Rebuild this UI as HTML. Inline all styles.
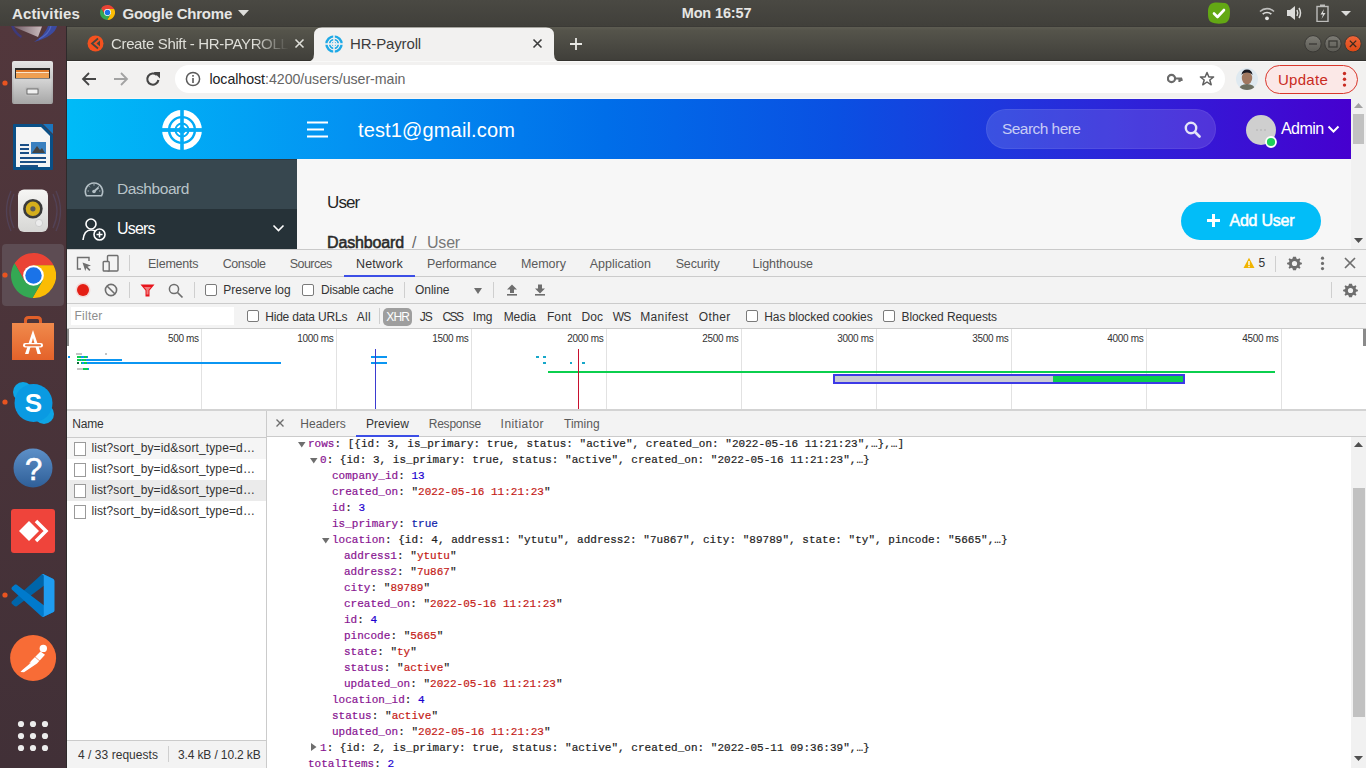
<!DOCTYPE html>
<html><head><meta charset="utf-8">
<style>
*{box-sizing:border-box;margin:0;padding:0}
html,body{width:1366px;height:768px;overflow:hidden;background:#f2f2f2;font-family:"Liberation Sans",sans-serif;position:relative}
.a{position:absolute}
.t{white-space:pre}
</style></head><body>
<div class="a" style="left:0px;top:0px;width:1366px;height:27px;background:linear-gradient(#4a4943,#403f3a);"></div>
<div class="a" style="left:0px;top:26px;width:1366px;height:1px;background:#3b3a36;"></div>
<div class="a t" style="left:12.00px;top:4.30px;font-size:15px;line-height:19px;color:#e6e6e4;font-weight:bold;letter-spacing:0.131px;">Activities</div>
<svg class="a" style="left:100.2px;top:5.199999999999999px;" width="15.0" height="15.0" viewBox="-1 -1 2 2"><path d="M-0.842 -0.539A1 1 0 0 1 0.888 -0.46L0 -0.46L0 0L-0.398 0.23Z" fill="#ea4335"/><path d="M0.888 -0.46A1 1 0 0 1 -0.046 0.999L0.398 0.23L0 0L0 -0.46Z" fill="#fbbc04"/><path d="M-0.046 0.999A1 1 0 0 1 -0.842 -0.539L-0.398 0.23L0 0L0.398 0.23Z" fill="#34a853"/><circle r="0.46" fill="#fff"/><circle r="0.365" fill="#1a73e8"/></svg>
<div class="a t" style="left:122.50px;top:4.30px;font-size:15px;line-height:19px;color:#e6e6e4;font-weight:bold;letter-spacing:-0.231px;">Google Chrome</div>
<svg class="a" style="left:238px;top:10px;" width="11" height="7" viewBox="0 0 11 7"><path d="M0 0H11L5.5 6Z" fill="#dededb"/></svg>
<div class="a t" style="left:681.70px;top:4.17px;font-size:14.5px;line-height:18px;color:#e6e6e4;font-weight:bold;letter-spacing:-0.134px;">Mon 16:57</div>
<svg class="a" style="left:1207px;top:2px;" width="24" height="22" viewBox="0 0 24 22"><path d="M6 1C10 0 14 1 18 1C22 2 23 6 23 10C23 15 22 20 18 21C13 22 8 22 4 20C1 18 1 14 1 10C1 6 2 2 6 1Z" fill="#63a814"/><path d="M7 11.5L10.5 15L17 8" stroke="#fff" stroke-width="2.6" fill="none" stroke-linecap="round" stroke-linejoin="round"/></svg>
<svg class="a" style="left:1259px;top:6px;" width="16" height="15" viewBox="0 0 16 15"><path d="M1 5.5A10 10 0 0 1 15 5.5" stroke="#bdbdbb" stroke-width="1.6" fill="none"/><path d="M3.7 8.2A6.3 6.3 0 0 1 12.3 8.2" stroke="#dcdcda" stroke-width="1.6" fill="none"/><circle cx="8" cy="12.3" r="1.9" fill="#e6e6e4"/></svg>
<svg class="a" style="left:1286px;top:5px;" width="17" height="16" viewBox="0 0 17 16"><path d="M1 5H4L9 1V15L4 11H1Z" fill="#dcdcda"/><path d="M11 5Q12.5 8 11 11" stroke="#dcdcda" stroke-width="1.5" fill="none"/><path d="M13 3Q16 8 13 13" stroke="#dcdcda" stroke-width="1.5" fill="none"/></svg>
<svg class="a" style="left:1316px;top:4px;" width="14" height="18" viewBox="0 0 14 18"><rect x="4" y="0.5" width="5" height="2" fill="#bdbdbb"/><rect x="1" y="2.5" width="11" height="15" fill="none" stroke="#bdbdbb" stroke-width="1.4"/><path d="M8 5L4.5 10.5H7L5.5 15L9.5 9H7Z" fill="#dcdcda"/></svg>
<svg class="a" style="left:1341px;top:11px;" width="11" height="6" viewBox="0 0 11 6"><path d="M0 0H10L5 5Z" fill="#dcdcda"/></svg>
<div class="a" style="left:0px;top:26px;width:67px;height:742px;background:linear-gradient(#52373c,#413037);"></div>
<div class="a" style="left:66px;top:26px;width:1px;height:742px;background:#2e2a2b;"></div>
<svg class="a" style="left:5px;top:26px;" width="57" height="18" viewBox="0 0 57 18"><defs><linearGradient id="env" x1="0" y1="0" x2="1" y2="0"><stop offset="0" stop-color="#6e5a64"/><stop offset="1" stop-color="#cbbcbe"/></linearGradient></defs><path d="M8 0.5L37 0.5L33 11Z" fill="url(#env)"/><path d="M6 0Q9 8 16 12L17 10Q11 6 9 0Z" fill="#3d3a7a"/><path d="M35 0H52Q50 10 29 16Q40 9 43 0Z" fill="#3b4aa0"/><path d="M46 0Q44 8 34 13" stroke="#5266c0" stroke-width="1.2" fill="none"/></svg>
<svg class="a" style="left:11px;top:60px;" width="43" height="45" viewBox="0 0 43 45"><defs><linearGradient id="fc" x1="0" y1="0" x2="0" y2="1"><stop offset="0" stop-color="#e6e6e6"/><stop offset="1" stop-color="#9a9a9a"/></linearGradient><linearGradient id="fd" x1="0" y1="0" x2="0" y2="1"><stop offset="0" stop-color="#d6d6d6"/><stop offset="1" stop-color="#a6a6a6"/></linearGradient></defs><rect x="1" y="1" width="41" height="43" rx="2" fill="url(#fc)"/><rect x="4" y="8" width="35" height="11" fill="#2a2a2a"/><rect x="5" y="10" width="33" height="8" fill="#e07a2a"/><rect x="5" y="12" width="33" height="1.3" fill="#fbe6c8"/><rect x="5" y="14" width="33" height="4" fill="#f0a050"/><rect x="2.5" y="18.5" width="38" height="25.5" fill="url(#fd)"/><rect x="14" y="27" width="15" height="9" rx="2" fill="#bdbdbd"/><rect x="16" y="29" width="11" height="5" fill="#f0f0f0" stroke="#555" stroke-width="0.8"/></svg>
<svg class="a" style="left:2px;top:80px;" width="6" height="6" viewBox="0 0 6 6"><circle cx="3" cy="3" r="2.6" fill="#e95420"/></svg>
<svg class="a" style="left:12px;top:123px;" width="42" height="48" viewBox="0 0 42 48"><path d="M2 1H30L41 12V46Q41 47 40 47H2Q1 47 1 46V2Q1 1 2 1Z" fill="#0a4f86"/><path d="M4 4H29L38 13V44H4Z" fill="#f4f4f4"/><path d="M31 1H41V11Z" fill="#1b76bf"/><rect x="8" y="21" width="9" height="2" fill="#1b4f86"/><rect x="8" y="25" width="9" height="2" fill="#1b4f86"/><rect x="8" y="29" width="9" height="2" fill="#1b4f86"/><rect x="19" y="19" width="15" height="12" fill="#3a80c0"/><path d="M20 30L25 23L28 27L30 25L33 30Z" fill="#444"/><rect x="8" y="34" width="26" height="2" fill="#1b4f86"/><rect x="8" y="38" width="26" height="2" fill="#1b4f86"/><rect x="8" y="42" width="18" height="2" fill="#1b4f86"/></svg>
<svg class="a" style="left:4px;top:186px;" width="59" height="50" viewBox="0 0 59 50"><g fill="none" stroke="#5a5a88" stroke-width="1.3" opacity="0.35"><path d="M10 8Q2 25 10 42"/><path d="M7 5Q-2 25 7 45"/><path d="M49 8Q57 25 49 42"/><path d="M52 5Q61 25 52 45"/></g><defs><linearGradient id="rb" x1="0" y1="0" x2="0" y2="1"><stop offset="0" stop-color="#f6f6f4"/><stop offset="1" stop-color="#d6d6d4"/></linearGradient></defs><rect x="14" y="3.5" width="30" height="42.5" rx="6" fill="url(#rb)"/><circle cx="28.9" cy="22.8" r="9.8" fill="#3a3a3a"/><circle cx="28.9" cy="22.8" r="7.2" fill="#d4ae1c"/><circle cx="28.9" cy="22.8" r="2.6" fill="#5a5a5a"/><circle cx="35" cy="37" r="3.6" fill="#ececec" stroke="#c8c8c8" stroke-width="0.8"/></svg>
<div class="a" style="left:2px;top:244px;width:62px;height:62px;background:#5d4c53;border-radius:4px"></div>
<svg class="a" style="left:10.5px;top:252.5px;" width="45.0" height="45.0" viewBox="-1 -1 2 2"><path d="M-0.842 -0.539A1 1 0 0 1 0.888 -0.46L0 -0.46L0 0L-0.398 0.23Z" fill="#ea4335"/><path d="M0.888 -0.46A1 1 0 0 1 -0.046 0.999L0.398 0.23L0 0L0 -0.46Z" fill="#fbbc04"/><path d="M-0.046 0.999A1 1 0 0 1 -0.842 -0.539L-0.398 0.23L0 0L0.398 0.23Z" fill="#34a853"/><circle r="0.46" fill="#fff"/><circle r="0.365" fill="#1a73e8"/></svg>
<svg class="a" style="left:2px;top:272px;" width="6" height="6" viewBox="0 0 6 6"><circle cx="3" cy="3" r="2.6" fill="#e95420"/></svg>
<svg class="a" style="left:11px;top:316px;" width="44" height="45" viewBox="0 0 44 45"><defs><linearGradient id="asg" x1="0" y1="0" x2="0" y2="1"><stop offset="0" stop-color="#f08a4c"/><stop offset="1" stop-color="#e4622a"/></linearGradient></defs><path d="M14.5 10V4.5Q14.5 1.5 17.5 1.5H26.5Q29.5 1.5 29.5 4.5V10" stroke="#e0602a" stroke-width="3" fill="none"/><rect x="1" y="7" width="42" height="37" fill="url(#asg)"/><path d="M22 14L14 38H17.5L22 22L26.5 38H30Z" fill="#fff"/><rect x="12" y="27" width="20" height="4.5" rx="2.2" fill="#fff"/><rect x="14" y="28.3" width="16" height="1.9" rx="1" fill="#e8743a"/></svg>
<svg class="a" style="left:12px;top:381px;" width="43" height="44" viewBox="0 0 43 44"><circle cx="11" cy="11" r="10" fill="#0ea5e5"/><circle cx="32" cy="33" r="10" fill="#0ea5e5"/><circle cx="21.5" cy="22" r="19" fill="#0a9ae2"/><text x="21.5" y="31" text-anchor="middle" font-family="Liberation Sans" font-weight="bold" font-size="26" fill="#fff">S</text></svg>
<svg class="a" style="left:2px;top:399px;" width="6" height="6" viewBox="0 0 6 6"><circle cx="3" cy="3" r="2.6" fill="#e95420"/></svg>
<svg class="a" style="left:13px;top:448px;" width="40" height="40" viewBox="0 0 40 40"><defs><linearGradient id="hg" x1="0" y1="0" x2="0" y2="1"><stop offset="0" stop-color="#5d90c8"/><stop offset="1" stop-color="#2f5f98"/></linearGradient></defs><circle cx="20" cy="20" r="19.5" fill="url(#hg)"/><text x="20.5" y="32" text-anchor="middle" font-family="Liberation Sans" font-size="31" fill="#fff" stroke="#fff" stroke-width="0.6">?</text></svg>
<svg class="a" style="left:11px;top:509px;" width="44" height="44" viewBox="0 0 44 44"><rect x="0" y="0" width="44" height="44" rx="3" fill="#ef443b"/><path d="M8 22L18 12L28 22L18 32Z" fill="#fff"/><path d="M25 12L35 22L25 32" stroke="#fff" stroke-width="3.5" fill="none"/></svg>
<svg class="a" style="left:11px;top:574px;" width="44" height="43" viewBox="0 0 100 100"><path d="M96.5 10.8L75.9 0.9C73.5 -0.3 70.6 0.2 68.8 2.1L1.3 63.6C-0.5 65.2 -0.5 68.1 1.4 69.7L6.9 74.7C8.4 76.1 10.6 76.2 12.2 74.9L93.4 13.3C96.1 11.3 100 13.2 100 16.6V16.4C100 14 98.6 11.8 96.5 10.8Z" fill="#0065a9"/><path d="M96.5 89.2L75.9 99.1C73.5 100.3 70.6 99.8 68.8 97.9L1.3 36.5C-0.5 34.8 -0.5 32 1.4 30.3L6.9 25.3C8.4 23.9 10.6 23.8 12.2 25.1L93.4 86.7C96.1 88.7 100 86.8 100 83.4V83.6C100 86 98.6 88.2 96.5 89.2Z" fill="#007acc"/><path d="M75.9 99.1C73.5 100.3 70.6 99.8 68.8 97.9C71.1 100.2 75 98.6 75 95.3V4.7C75 1.4 71.1 -0.2 68.8 2.1C70.6 0.2 73.5 -0.3 75.9 0.9L96.5 10.8C98.6 11.8 100 14 100 16.4V83.6C100 86 98.6 88.2 96.5 89.2Z" fill="#1f9cf0"/></svg>
<svg class="a" style="left:2px;top:592px;" width="6" height="6" viewBox="0 0 6 6"><circle cx="3" cy="3" r="2.6" fill="#e95420"/></svg>
<svg class="a" style="left:10px;top:635px;" width="47" height="47" viewBox="0 0 47 47"><circle cx="23.1" cy="23.1" r="23" fill="#f86c36"/><circle cx="33.3" cy="13.4" r="3.7" fill="#fff"/><path d="M30.5 16.5L35 19.8L27 28.5L14 37.2L10.5 37L12 35.2L21.5 27.2L19 28.5L22 25Z" fill="#fff"/><path d="M24 21L31 27" stroke="#f86c36" stroke-width="0.7"/></svg>
<svg class="a" style="left:15px;top:718px;" width="36" height="36" viewBox="0 0 36 36"><circle cx="6" cy="6" r="3.1" fill="#ececec"/><circle cx="18" cy="6" r="3.1" fill="#ececec"/><circle cx="30" cy="6" r="3.1" fill="#ececec"/><circle cx="6" cy="18" r="3.1" fill="#ececec"/><circle cx="18" cy="18" r="3.1" fill="#ececec"/><circle cx="30" cy="18" r="3.1" fill="#ececec"/><circle cx="6" cy="30" r="3.1" fill="#ececec"/><circle cx="18" cy="30" r="3.1" fill="#ececec"/><circle cx="30" cy="30" r="3.1" fill="#ececec"/></svg>
<div class="a" style="left:67px;top:27px;width:1299px;height:33px;background:linear-gradient(#5d5c52,#55544b 10%,#403f3a);"></div>
<div class="a" style="left:67px;top:60px;width:1299px;height:1px;background:#33322e;"></div>
<svg class="a" style="left:87px;top:35px;" width="17" height="17" viewBox="0 0 17 17"><circle cx="8.5" cy="8.5" r="8" fill="#f4511e"/><path d="M11 3.5L5 8.5L11 13.5" stroke="#47463f" stroke-width="1.8" fill="none"/><path d="M9.5 8.5L13 5.5V11.5Z" fill="#47463f"/></svg>
<div class="a t" style="left:111px;top:33px;width:178px;height:22px;overflow:hidden;font-size:15px;line-height:22px;color:#dfdfd9;letter-spacing:-0.35px;-webkit-mask-image:linear-gradient(to right,#000 80%,transparent)">Create Shift - HR-PAYROLL</div>
<svg class="a" style="left:294px;top:38px;" width="11" height="11" viewBox="0 0 11 11"><path d="M1.5 1.5L9.5 9.5M9.5 1.5L1.5 9.5" stroke="#dfdfd9" stroke-width="1.6"/></svg>
<svg class="a" style="left:306px;top:27px;" width="256" height="35" viewBox="0 0 256 35"><path d="M0 35Q8 35 8 27V8Q8 0.5 16 0.5H240Q248 0.5 248 8V27Q248 35 256 35Z" fill="#f2f1f0"/></svg>
<svg class="a" style="left:325px;top:35px;" width="18" height="18" viewBox="0 0 18 18"><circle cx="9" cy="9" r="7.6" fill="none" stroke="#1ea9e6" stroke-width="2.4"/><circle cx="9" cy="9" r="4.3" fill="none" stroke="#1ea9e6" stroke-width="1.7"/><circle cx="9" cy="9" r="2" fill="none" stroke="#1ea9e6" stroke-width="0.9"/><rect x="8.2" y="0" width="1.6" height="18" fill="#f2f1f0"/><rect x="0" y="8.2" width="18" height="1.6" fill="#f2f1f0"/></svg>
<div class="a t" style="left:350.00px;top:34.10px;font-size:15px;line-height:19px;color:#3c3c3c;letter-spacing:-0.151px;">HR-Payroll</div>
<svg class="a" style="left:532px;top:38px;" width="11" height="11" viewBox="0 0 11 11"><path d="M1.5 1.5L9.5 9.5M9.5 1.5L1.5 9.5" stroke="#3c3c3c" stroke-width="1.6"/></svg>
<svg class="a" style="left:569px;top:37px;" width="14" height="14" viewBox="0 0 14 14"><path d="M7 1V13M1 7H13" stroke="#e8e8e4" stroke-width="1.8"/></svg>
<svg class="a" style="left:1303px;top:34px;" width="60" height="20" viewBox="0 0 60 20"><defs><linearGradient id="wb" x1="0" y1="0" x2="0" y2="1"><stop offset="0" stop-color="#7e7d76"/><stop offset="1" stop-color="#5b5a54"/></linearGradient><linearGradient id="wc" x1="0" y1="0" x2="0" y2="1"><stop offset="0" stop-color="#f0663a"/><stop offset="1" stop-color="#dd4814"/></linearGradient></defs><circle cx="10" cy="9.8" r="8.2" fill="url(#wb)" stroke="#3a3935" stroke-width="1"/><path d="M6 10H14" stroke="#3a3935" stroke-width="1.3"/><circle cx="30" cy="9.8" r="8.2" fill="url(#wb)" stroke="#3a3935" stroke-width="1"/><rect x="26" y="7" width="8" height="6" fill="none" stroke="#3a3935" stroke-width="1.3"/><circle cx="50" cy="9.8" r="8.2" fill="url(#wc)" stroke="#3a3935" stroke-width="1"/><path d="M46.8 6.6L53.2 13M53.2 6.6L46.8 13" stroke="#3a2a20" stroke-width="1.3"/></svg>
<div class="a" style="left:67px;top:61px;width:1299px;height:37px;background:#f2f1f0;"></div>
<div class="a" style="left:67px;top:61px;width:1299px;height:1px;background:#f9f9f8;"></div>
<svg class="a" style="left:81px;top:71px;" width="16" height="16" viewBox="0 0 16 16"><path d="M15 8H2.5M8 2L2 8L8 14" stroke="#454545" stroke-width="1.8" fill="none"/></svg>
<svg class="a" style="left:113px;top:71px;" width="16" height="16" viewBox="0 0 16 16"><path d="M1 8H13.5M8 2L14 8L8 14" stroke="#a2a2a2" stroke-width="1.8" fill="none"/></svg>
<svg class="a" style="left:145px;top:71px;" width="16" height="16" viewBox="0 0 16 16"><path d="M13.4 9A5.6 5.6 0 1 1 11.8 4.1" stroke="#454545" stroke-width="2.1" fill="none"/><path d="M8.5 1H15V7.5Z" fill="#454545"/></svg>
<div class="a" style="left:175px;top:65px;width:1050px;height:28px;background:#fff;border-radius:14px"></div>
<svg class="a" style="left:185px;top:71px;" width="16" height="16" viewBox="0 0 16 16"><circle cx="8" cy="8" r="6.6" fill="none" stroke="#5a5a5a" stroke-width="1.5"/><rect x="7.2" y="7" width="1.6" height="5" fill="#5a5a5a"/><rect x="7.2" y="4" width="1.6" height="1.7" fill="#5a5a5a"/></svg>
<div class="a t" style="left:209.4px;top:69.6px;font-size:14.2px;line-height:18px;color:#202124;letter-spacing:-0.04px">localhost<span style="color:#656565">:4200/users/user-main</span></div>
<svg class="a" style="left:1167px;top:73px;" width="16" height="11" viewBox="0 0 16 11"><circle cx="4.5" cy="5.5" r="3.6" fill="none" stroke="#6a6a6a" stroke-width="2.2"/><path d="M8 5.5H15M12.5 5.5V9M14.5 5.5V8" stroke="#6a6a6a" stroke-width="2.2"/></svg>
<svg class="a" style="left:1199px;top:71px;" width="16" height="16" viewBox="0 0 16 16"><path d="M8 1.5L9.9 6H14.6L10.8 9L12.2 13.8L8 11L3.8 13.8L5.2 9L1.4 6H6.1Z" fill="none" stroke="#606060" stroke-width="1.5" stroke-linejoin="round"/></svg>
<svg class="a" style="left:1236px;top:68px;" width="22" height="22" viewBox="0 0 22 22"><defs><clipPath id="av"><circle cx="11" cy="11" r="11"/></clipPath></defs><g clip-path="url(#av)"><rect width="22" height="22" fill="#dfe9f0"/><ellipse cx="11" cy="10" rx="5.2" ry="6.5" fill="#a07860"/><path d="M5.5 7Q6 1.5 11 1.5Q16 1.5 16.5 7Q15 4.5 11 4.5Q7 4.5 5.5 7Z" fill="#1a1a22"/><path d="M2 22Q4 16 11 16Q18 16 20 22Z" fill="#6c6f60"/></g></svg>
<div class="a" style="left:1265px;top:65px;width:93px;height:29px;background:#fbe8e7;border:1px solid #d9372c;border-radius:14.5px"></div>
<div class="a t" style="left:1278.00px;top:70.10px;font-size:15px;line-height:19px;color:#c92b22;letter-spacing:0.272px;">Update</div>
<svg class="a" style="left:1342px;top:71px;" width="5" height="17" viewBox="0 0 5 17"><circle cx="2.5" cy="2.5" r="1.7" fill="#c92b22"/><circle cx="2.5" cy="8.3" r="1.7" fill="#c92b22"/><circle cx="2.5" cy="14.1" r="1.7" fill="#c92b22"/></svg>
<div class="a" style="left:67px;top:98px;width:1284px;height:151px;background:#f7f7f7;"></div>
<div class="a" style="left:67px;top:99px;width:1284px;height:60px;background:linear-gradient(to right,#00bbf7 0%,#0392f2 22%,#006ee9 42%,#0a50e2 60%,#2a28da 80%,#4600cf 100%);"></div>
<svg class="a" style="left:162px;top:110px;" width="40" height="40" viewBox="0 0 40 40"><circle cx="20" cy="20" r="17" fill="none" stroke="#fff" stroke-width="5.8"/><circle cx="20" cy="20" r="9.6" fill="none" stroke="#fff" stroke-width="4.2"/><circle cx="20" cy="20" r="4.6" fill="none" stroke="#fff" stroke-width="2"/><rect x="18.2" y="0" width="3.6" height="40" fill="#05abf5"/><rect x="0" y="18.1" width="40" height="3.8" fill="#05abf5"/></svg>
<svg class="a" style="left:307px;top:121px;" width="22" height="18" viewBox="0 0 22 18"><path d="M0 1.5H21M0 8.5H17M0 15.5H21" stroke="#fff" stroke-width="2.2"/></svg>
<div class="a t" style="left:358.00px;top:117.57px;font-size:20px;line-height:25px;color:#ffffff;letter-spacing:0.147px;">test1@gmail.com</div>
<div class="a" style="left:986px;top:109px;width:230px;height:40px;background:rgba(255,255,255,0.13);border-radius:20px;border:1px solid rgba(255,255,255,0.07)"></div>
<div class="a t" style="left:1002.00px;top:118.93px;font-size:15.5px;line-height:19px;color:rgba(255,255,255,0.72);letter-spacing:-0.549px;">Search here</div>
<svg class="a" style="left:1184px;top:121px;" width="17" height="17" viewBox="0 0 17 17"><circle cx="7" cy="7" r="5.2" fill="none" stroke="#e4e4f8" stroke-width="2.4"/><path d="M11 11L15.5 15.5" stroke="#e4e4f8" stroke-width="2.6" stroke-linecap="round"/></svg>
<svg class="a" style="left:1245px;top:114px;" width="34" height="34" viewBox="0 0 34 34"><circle cx="16" cy="16" r="15" fill="#cfcfcf"/><path d="M11 16H13M15 16H17M19 16H21" stroke="#aaa" stroke-width="0.8"/><circle cx="26" cy="28" r="5" fill="#1fcf5a" stroke="#fff" stroke-width="1.8"/></svg>
<div class="a t" style="left:1281.00px;top:119.05px;font-size:16px;line-height:20px;color:#ffffff;letter-spacing:-0.550px;">Admin</div>
<svg class="a" style="left:1327px;top:125px;" width="13" height="9" viewBox="0 0 13 9"><path d="M1.5 1.5L6.5 6.5L11.5 1.5" stroke="#fff" stroke-width="2" fill="none"/></svg>
<div class="a" style="left:67px;top:159px;width:230px;height:90px;background:#37474f;"></div>
<div class="a" style="left:67px;top:209px;width:230px;height:40px;background:#263238;"></div>
<div class="a" style="left:67px;top:159px;width:230px;height:1px;background:#2e3b41;"></div>
<svg class="a" style="left:84px;top:180px;" width="20" height="18" viewBox="0 0 20 18"><path d="M2.5 15.8A8.6 8.6 0 1 1 17.5 15.8Z" fill="none" stroke="#b4c0c6" stroke-width="1.6"/><path d="M10 11.5L14.5 7.5" stroke="#b4c0c6" stroke-width="1.7"/><circle cx="10" cy="11.5" r="1.8" fill="#b4c0c6"/><path d="M10 4.2V5.6M5 6.3L5.9 7.2M15 6.3L14.1 7.2M3.6 11H4.9M15.1 11H16.4" stroke="#b4c0c6" stroke-width="1"/></svg>
<div class="a t" style="left:117.00px;top:178.73px;font-size:15.5px;line-height:19px;color:#b9c4c9;letter-spacing:-0.425px;">Dashboard</div>
<svg class="a" style="left:82px;top:218px;" width="25" height="23" viewBox="0 0 25 23"><circle cx="9" cy="6" r="5" fill="none" stroke="#fff" stroke-width="1.6"/><path d="M1 22Q2 12 9 12Q12 12 14 13.5" fill="none" stroke="#fff" stroke-width="1.6"/><circle cx="17.5" cy="16.5" r="5.5" fill="#263238" stroke="#fff" stroke-width="1.6"/><path d="M17.5 13.5V19.5M14.5 16.5H20.5" stroke="#fff" stroke-width="1.5"/></svg>
<div class="a t" style="left:117.00px;top:219.45px;font-size:16px;line-height:20px;color:#ffffff;letter-spacing:-0.836px;">Users</div>
<svg class="a" style="left:272px;top:224px;" width="13" height="9" viewBox="0 0 13 9"><path d="M1.5 1.5L6.5 6.5L11.5 1.5" stroke="#fff" stroke-width="1.6" fill="none"/></svg>
<div class="a t" style="left:327.00px;top:192.01px;font-size:17px;line-height:21px;color:#252525;letter-spacing:-0.898px;">User</div>
<div class="a" style="left:297px;top:159px;width:1054px;height:90px;overflow:hidden">
<div class="a t" style="left:30.00px;top:73.95px;font-size:16px;line-height:20px;color:#2a2a2a;letter-spacing:-0.141px;-webkit-text-stroke:0.55px #2a2a2a">Dashboard</div>
<div class="a t" style="left:115.00px;top:73.95px;font-size:16px;line-height:20px;color:#666;">/</div>
<div class="a t" style="left:130.00px;top:73.95px;font-size:16px;line-height:20px;color:#777;letter-spacing:-0.195px;">User</div>
</div>
<div class="a" style="left:1181px;top:202px;width:140px;height:38px;background:#02bdf8;border-radius:19px"></div>
<svg class="a" style="left:1206px;top:213px;" width="15" height="15" viewBox="0 0 15 15"><path d="M7.5 1V14M1 7.5H14" stroke="#fff" stroke-width="3"/></svg>
<div class="a t" style="left:1229.50px;top:211.25px;font-size:16px;line-height:20px;color:#fff;letter-spacing:-0.224px;-webkit-text-stroke:0.5px #fff">Add User</div>
<div class="a" style="left:1351px;top:98px;width:15px;height:151px;background:#f1f1f1;"></div>
<svg class="a" style="left:1354px;top:103px;" width="9" height="6" viewBox="0 0 9 6"><path d="M0 5H9L4.5 0Z" fill="#a3a3a3"/></svg>
<div class="a" style="left:1353px;top:114px;width:11px;height:30px;background:#c1c1c1;"></div>
<svg class="a" style="left:1354px;top:238px;" width="9" height="6" viewBox="0 0 9 6"><path d="M0 0H9L4.5 5Z" fill="#505050"/></svg>
<div class="a" style="left:67px;top:249px;width:1299px;height:519px;background:#ffffff;"></div>
<div class="a" style="left:67px;top:249px;width:1299px;height:1px;background:#cacaca;"></div>
<div class="a" style="left:67px;top:250px;width:1299px;height:26px;background:#f3f3f3;"></div>
<div class="a" style="left:67px;top:276px;width:1299px;height:1px;background:#cbcbcb;"></div>
<svg class="a" style="left:76px;top:256px;" width="16" height="15" viewBox="0 0 16 15"><path d="M5 13H1.5V1.5H13V5" fill="none" stroke="#6e6e6e" stroke-width="1.4"/><path d="M6.5 6.5L15 9.5L11.5 10.8L14.5 13.8L13.3 15L10.3 12L9.3 15Z" fill="#6e6e6e"/></svg>
<svg class="a" style="left:102px;top:254px;" width="18" height="18" viewBox="0 0 18 18"><rect x="5.5" y="1.5" width="10.5" height="15.5" rx="1" fill="none" stroke="#6e6e6e" stroke-width="1.4"/><rect x="1.2" y="7.5" width="6" height="9.5" rx="0.8" fill="#f3f3f3" stroke="#6e6e6e" stroke-width="1.4"/></svg>
<div class="a" style="left:129px;top:255px;width:1px;height:16px;background:#cfcfcf;"></div>
<div class="a t" style="left:148.00px;top:255.67px;font-size:12.5px;line-height:16px;color:#5a5a5a;letter-spacing:-0.226px;">Elements</div>
<div class="a t" style="left:222.70px;top:255.67px;font-size:12.5px;line-height:16px;color:#5a5a5a;letter-spacing:-0.423px;">Console</div>
<div class="a t" style="left:289.70px;top:255.67px;font-size:12.5px;line-height:16px;color:#5a5a5a;letter-spacing:-0.537px;">Sources</div>
<div class="a t" style="left:356.00px;top:255.67px;font-size:12.5px;line-height:16px;color:#333;letter-spacing:0.137px;">Network</div>
<div class="a" style="left:344px;top:275px;width:71px;height:2px;background:#3c4ee6;"></div>
<div class="a t" style="left:427.00px;top:255.67px;font-size:12.5px;line-height:16px;color:#5a5a5a;letter-spacing:-0.187px;">Performance</div>
<div class="a t" style="left:520.90px;top:255.67px;font-size:12.5px;line-height:16px;color:#5a5a5a;letter-spacing:-0.024px;">Memory</div>
<div class="a t" style="left:589.70px;top:255.67px;font-size:12.5px;line-height:16px;color:#5a5a5a;letter-spacing:0.014px;">Application</div>
<div class="a t" style="left:675.70px;top:255.67px;font-size:12.5px;line-height:16px;color:#5a5a5a;letter-spacing:-0.157px;">Security</div>
<div class="a t" style="left:752.60px;top:255.67px;font-size:12.5px;line-height:16px;color:#5a5a5a;letter-spacing:-0.076px;">Lighthouse</div>
<svg class="a" style="left:1243px;top:257px;" width="12" height="12" viewBox="0 0 12 12"><path d="M6 0.8L11.5 11H0.5Z" fill="#f1b400"/><rect x="5.3" y="4" width="1.4" height="4" fill="#fff"/><rect x="5.3" y="8.8" width="1.4" height="1.4" fill="#fff"/></svg>
<div class="a t" style="left:1258.60px;top:256.34px;font-size:12px;line-height:15px;color:#333;">5</div>
<div class="a" style="left:1275px;top:256px;width:1px;height:16px;background:#cfcfcf;"></div>
<svg class="a" style="left:1286.5px;top:255.5px;" width="15" height="15" viewBox="0 0 15 15"><path d="M7.5 0.8L9 0.8L9.4 2.6L10.8 3.2L12.4 2.2L13.5 3.3L12.5 4.9L13.1 6.3L14.9 6.7V8.3L13.1 8.7L12.5 10.1L13.5 11.7L12.4 12.8L10.8 11.8L9.4 12.4L9 14.2H7.5H6L5.6 12.4L4.2 11.8L2.6 12.8L1.5 11.7L2.5 10.1L1.9 8.7L0.1 8.3V6.7L1.9 6.3L2.5 4.9L1.5 3.3L2.6 2.2L4.2 3.2L5.6 2.6L6 0.8Z" fill="#6e6e6e"/><circle cx="7.5" cy="7.5" r="2.6" fill="#f3f3f3"/></svg>
<svg class="a" style="left:1320px;top:256px;" width="5" height="15" viewBox="0 0 5 15"><circle cx="2.5" cy="2.2" r="1.6" fill="#6e6e6e"/><circle cx="2.5" cy="7.4" r="1.6" fill="#6e6e6e"/><circle cx="2.5" cy="12.6" r="1.6" fill="#6e6e6e"/></svg>
<svg class="a" style="left:1344px;top:257px;" width="12" height="12" viewBox="0 0 12 12"><path d="M1 1L11 11M11 1L1 11" stroke="#6e6e6e" stroke-width="1.7"/></svg>
<div class="a" style="left:67px;top:277px;width:1299px;height:26px;background:#f3f3f3;"></div>
<div class="a" style="left:67px;top:303px;width:1299px;height:1px;background:#cbcbcb;"></div>
<svg class="a" style="left:74px;top:281px;" width="18" height="18" viewBox="0 0 18 18"><circle cx="9" cy="9" r="7.5" fill="#f4c7c5" opacity="0.6"/><circle cx="9" cy="9" r="6" fill="#e41e14"/></svg>
<svg class="a" style="left:104px;top:283px;" width="14" height="14" viewBox="0 0 14 14"><circle cx="7" cy="7" r="5.6" fill="none" stroke="#6e6e6e" stroke-width="1.6"/><path d="M3 3L11 11" stroke="#6e6e6e" stroke-width="1.6"/></svg>
<div class="a" style="left:129px;top:282px;width:1px;height:16px;background:#cfcfcf;"></div>
<svg class="a" style="left:140px;top:284px;" width="15" height="13" viewBox="0 0 15 13"><path d="M0.5 0.5H14.5L9.5 6.5V12.5H5.5V6.5Z" fill="#e8141c"/><path d="M4 3H11L8.5 6V10.5H6.5V6Z" fill="#f07a7a"/></svg>
<svg class="a" style="left:168px;top:283px;" width="16" height="16" viewBox="0 0 16 16"><circle cx="6" cy="6" r="4.6" fill="none" stroke="#6e6e6e" stroke-width="1.5"/><path d="M9.5 9.5L14.5 14.5" stroke="#6e6e6e" stroke-width="1.7"/></svg>
<div class="a" style="left:194px;top:282px;width:1px;height:16px;background:#cfcfcf;"></div>
<div class="a" style="left:205px;top:284px;width:12px;height:12px;background:#fff;border:1px solid #7a7a7a;border-radius:2px"></div>
<div class="a t" style="left:223.30px;top:283.14px;font-size:12px;line-height:15px;color:#333333;">Preserve log</div>
<div class="a" style="left:302px;top:284px;width:12px;height:12px;background:#fff;border:1px solid #7a7a7a;border-radius:2px"></div>
<div class="a t" style="left:321.00px;top:283.14px;font-size:12px;line-height:15px;color:#333333;letter-spacing:-0.221px;">Disable cache</div>
<div class="a" style="left:404px;top:282px;width:1px;height:16px;background:#cfcfcf;"></div>
<div class="a t" style="left:415.00px;top:283.14px;font-size:12px;line-height:15px;color:#333333;letter-spacing:-0.031px;">Online</div>
<svg class="a" style="left:474px;top:288px;" width="8" height="6" viewBox="0 0 8 6"><path d="M0 0H8L4 6Z" fill="#6e6e6e"/></svg>
<div class="a" style="left:493px;top:282px;width:1px;height:16px;background:#cfcfcf;"></div>
<svg class="a" style="left:506px;top:284px;" width="12" height="12" viewBox="0 0 12 12"><path d="M6 0.5L11 5.5H8V9H4V5.5H1Z" fill="#6e6e6e"/><rect x="1" y="10" width="10" height="1.6" fill="#6e6e6e"/></svg>
<svg class="a" style="left:534px;top:284px;" width="12" height="12" viewBox="0 0 12 12"><path d="M6 9.5L11 4.5H8V0.5H4V4.5H1Z" fill="#6e6e6e"/><rect x="1" y="10" width="10" height="1.6" fill="#6e6e6e"/></svg>
<div class="a" style="left:1331px;top:282px;width:1px;height:16px;background:#cfcfcf;"></div>
<svg class="a" style="left:1342.5px;top:282.5px;" width="15" height="15" viewBox="0 0 15 15"><path d="M7.5 0.8L9 0.8L9.4 2.6L10.8 3.2L12.4 2.2L13.5 3.3L12.5 4.9L13.1 6.3L14.9 6.7V8.3L13.1 8.7L12.5 10.1L13.5 11.7L12.4 12.8L10.8 11.8L9.4 12.4L9 14.2H7.5H6L5.6 12.4L4.2 11.8L2.6 12.8L1.5 11.7L2.5 10.1L1.9 8.7L0.1 8.3V6.7L1.9 6.3L2.5 4.9L1.5 3.3L2.6 2.2L4.2 3.2L5.6 2.6L6 0.8Z" fill="#6e6e6e"/><circle cx="7.5" cy="7.5" r="2.6" fill="#f3f3f3"/></svg>
<div class="a" style="left:67px;top:304px;width:1299px;height:24px;background:#f3f3f3;"></div>
<div class="a" style="left:67px;top:328px;width:1299px;height:1px;background:#cbcbcb;"></div>
<div class="a" style="left:71px;top:307px;width:163px;height:18px;background:#ffffff;"></div>
<div class="a t" style="left:74.50px;top:309.34px;font-size:12px;line-height:15px;color:#8e8e8e;letter-spacing:0.239px;">Filter</div>
<div class="a" style="left:247px;top:310px;width:12px;height:12px;background:#fff;border:1px solid #7a7a7a;border-radius:2px"></div>
<div class="a t" style="left:265.20px;top:309.54px;font-size:12px;line-height:15px;color:#333333;letter-spacing:-0.193px;">Hide data URLs</div>
<div class="a t" style="left:356.80px;top:309.54px;font-size:12px;line-height:15px;color:#333333;letter-spacing:0.288px;">All</div>
<div class="a" style="left:378.5px;top:308px;width:1px;height:16px;background:#cfcfcf;"></div>
<div class="a" style="left:383px;top:307.5px;width:29.4px;height:18.5px;background:#9e9e9e;border-radius:5px"></div>
<div class="a t" style="left:386.30px;top:309.54px;font-size:12px;line-height:15px;color:#ffffff;letter-spacing:-0.879px;">XHR</div>
<div class="a t" style="left:419.70px;top:309.54px;font-size:12px;line-height:15px;color:#333333;letter-spacing:-0.852px;">JS</div>
<div class="a t" style="left:442.60px;top:309.54px;font-size:12px;line-height:15px;color:#333333;letter-spacing:-1.691px;">CSS</div>
<div class="a t" style="left:472.70px;top:309.54px;font-size:12px;line-height:15px;color:#333333;letter-spacing:-0.101px;">Img</div>
<div class="a t" style="left:503.70px;top:309.54px;font-size:12px;line-height:15px;color:#333333;letter-spacing:-0.097px;">Media</div>
<div class="a t" style="left:546.90px;top:309.54px;font-size:12px;line-height:15px;color:#333333;letter-spacing:0.122px;">Font</div>
<div class="a t" style="left:581.60px;top:309.54px;font-size:12px;line-height:15px;color:#333333;letter-spacing:-0.013px;">Doc</div>
<div class="a t" style="left:612.70px;top:309.54px;font-size:12px;line-height:15px;color:#333333;letter-spacing:-0.865px;">WS</div>
<div class="a t" style="left:640.20px;top:309.54px;font-size:12px;line-height:15px;color:#333333;letter-spacing:0.369px;">Manifest</div>
<div class="a t" style="left:698.80px;top:309.54px;font-size:12px;line-height:15px;color:#333333;letter-spacing:0.358px;">Other</div>
<div class="a" style="left:746px;top:310px;width:12px;height:12px;background:#fff;border:1px solid #7a7a7a;border-radius:2px"></div>
<div class="a t" style="left:764.30px;top:309.54px;font-size:12px;line-height:15px;color:#333333;letter-spacing:-0.092px;">Has blocked cookies</div>
<div class="a" style="left:883px;top:310px;width:12px;height:12px;background:#fff;border:1px solid #7a7a7a;border-radius:2px"></div>
<div class="a t" style="left:901.50px;top:309.54px;font-size:12px;line-height:15px;color:#333333;letter-spacing:-0.076px;">Blocked Requests</div>
<div class="a" style="left:67px;top:329px;width:1299px;height:80px;background:#ffffff;"></div>
<div class="a" style="left:201px;top:329px;width:1px;height:80px;background:#e2e2e2;"></div>
<div class="a t" style="left:168.10px;top:332.53px;font-size:10px;line-height:12px;color:#333;letter-spacing:-0.399px;">500 ms</div>
<div class="a" style="left:336px;top:329px;width:1px;height:80px;background:#e2e2e2;"></div>
<div class="a t" style="left:297.30px;top:332.53px;font-size:10px;line-height:12px;color:#333;letter-spacing:-0.308px;">1000 ms</div>
<div class="a" style="left:471px;top:329px;width:1px;height:80px;background:#e2e2e2;"></div>
<div class="a t" style="left:432.30px;top:332.53px;font-size:10px;line-height:12px;color:#333;letter-spacing:-0.308px;">1500 ms</div>
<div class="a" style="left:606px;top:329px;width:1px;height:80px;background:#e2e2e2;"></div>
<div class="a t" style="left:567.30px;top:332.53px;font-size:10px;line-height:12px;color:#333;letter-spacing:-0.308px;">2000 ms</div>
<div class="a" style="left:741px;top:329px;width:1px;height:80px;background:#e2e2e2;"></div>
<div class="a t" style="left:702.30px;top:332.53px;font-size:10px;line-height:12px;color:#333;letter-spacing:-0.308px;">2500 ms</div>
<div class="a" style="left:876px;top:329px;width:1px;height:80px;background:#e2e2e2;"></div>
<div class="a t" style="left:837.30px;top:332.53px;font-size:10px;line-height:12px;color:#333;letter-spacing:-0.308px;">3000 ms</div>
<div class="a" style="left:1011px;top:329px;width:1px;height:80px;background:#e2e2e2;"></div>
<div class="a t" style="left:972.30px;top:332.53px;font-size:10px;line-height:12px;color:#333;letter-spacing:-0.308px;">3500 ms</div>
<div class="a" style="left:1146px;top:329px;width:1px;height:80px;background:#e2e2e2;"></div>
<div class="a t" style="left:1107.30px;top:332.53px;font-size:10px;line-height:12px;color:#333;letter-spacing:-0.308px;">4000 ms</div>
<div class="a" style="left:1281px;top:329px;width:1px;height:80px;background:#e2e2e2;"></div>
<div class="a t" style="left:1242.30px;top:332.53px;font-size:10px;line-height:12px;color:#333;letter-spacing:-0.308px;">4500 ms</div>
<div class="a" style="left:67px;top:329px;width:2px;height:17px;background:#8a8a8a;"></div>
<div class="a" style="left:1363px;top:329px;width:3px;height:17px;background:#8a8a8a;"></div>
<div class="a" style="left:76px;top:353px;width:5.5px;height:2px;background:#c4c4c4;"></div>
<div class="a" style="left:105px;top:353px;width:2px;height:2px;background:#c4c4c4;"></div>
<div class="a" style="left:68px;top:356px;width:2px;height:2px;background:#0b96f2;"></div>
<div class="a" style="left:76.5px;top:356px;width:4.5px;height:2px;background:#0bcf4e;"></div>
<div class="a" style="left:81px;top:356px;width:7px;height:2px;background:#0b96f2;"></div>
<div class="a" style="left:84px;top:356px;width:2.5px;height:2px;background:#0bcf4e;"></div>
<div class="a" style="left:76.5px;top:359px;width:4.5px;height:2px;background:#0bcf4e;"></div>
<div class="a" style="left:81px;top:359px;width:1px;height:2px;background:#0b96f2;"></div>
<div class="a" style="left:82px;top:359px;width:3.799999999999997px;height:2px;background:#0bcf4e;"></div>
<div class="a" style="left:85.8px;top:359px;width:36.2px;height:2px;background:#0b96f2;"></div>
<div class="a" style="left:77.2px;top:362px;width:1.7999999999999972px;height:2px;background:#0a6a3a;"></div>
<div class="a" style="left:80.8px;top:362px;width:1.2000000000000028px;height:2px;background:#0bcf4e;"></div>
<div class="a" style="left:82px;top:362px;width:1.7000000000000028px;height:2px;background:#0b96f2;"></div>
<div class="a" style="left:83.7px;top:362px;width:3.0999999999999943px;height:2px;background:#0bcf4e;"></div>
<div class="a" style="left:86.8px;top:362px;width:193.8px;height:2px;background:#0b96f2;"></div>
<div class="a" style="left:76.7px;top:368px;width:6.299999999999997px;height:2px;background:#c4c4c4;"></div>
<div class="a" style="left:83px;top:368px;width:4.900000000000006px;height:2px;background:#0bcf4e;"></div>
<div class="a" style="left:87.9px;top:368px;width:1.0999999999999943px;height:2px;background:#0b96f2;"></div>
<div class="a" style="left:371px;top:356px;width:16px;height:2px;background:#0b96f2;"></div>
<div class="a" style="left:371px;top:362px;width:16px;height:2px;background:#0b96f2;"></div>
<div class="a" style="left:375px;top:349px;width:1px;height:60px;background:#3b3bd0;"></div>
<div class="a" style="left:535.5px;top:356px;width:3.5px;height:2px;background:#17a7c9;"></div>
<div class="a" style="left:543px;top:356px;width:3px;height:2px;background:#17a7c9;"></div>
<div class="a" style="left:543px;top:362px;width:3px;height:2px;background:#17a7c9;"></div>
<div class="a" style="left:569.5px;top:362px;width:2.5px;height:2px;background:#17a7c9;"></div>
<div class="a" style="left:582px;top:362px;width:3px;height:2px;background:#17a7c9;"></div>
<div class="a" style="left:547.8px;top:371px;width:726.8px;height:2px;background:#0bcf4e;"></div>
<div class="a" style="left:578px;top:349px;width:1px;height:60px;background:#c8102e;"></div>
<div class="a" style="left:832.7px;top:373.5px;width:352px;height:10px;background:#c9c9d4;border:2px solid #3d3ae6"></div>
<div class="a" style="left:1053px;top:375.5px;width:129.5px;height:6px;background:#0bcf4e;"></div>
<div class="a" style="left:67px;top:409px;width:1299px;height:2px;background:#d3d3d3;"></div>
<div class="a" style="left:67px;top:411px;width:199px;height:26px;background:#f3f3f3;"></div>
<div class="a" style="left:67px;top:437px;width:199px;height:1px;background:#cbcbcb;"></div>
<div class="a t" style="left:72.30px;top:416.54px;font-size:12px;line-height:15px;color:#333333;letter-spacing:-0.177px;">Name</div>
<div class="a" style="left:266px;top:411px;width:1px;height:357px;background:#cbcbcb;"></div>
<div class="a" style="left:67px;top:438px;width:199px;height:21px;background:#f5f5f5;"></div>
<div class="a" style="left:74px;top:441.5px;width:12px;height:14px;background:#fff;border:1px solid #9a9a9a"></div>
<div class="a t" style="left:91.40px;top:440.84px;font-size:12px;line-height:15px;color:#333333;letter-spacing:0.126px;">list?sort_by=id&amp;sort_type=d…</div>
<div class="a" style="left:67px;top:459px;width:199px;height:21px;background:#ffffff;"></div>
<div class="a" style="left:74px;top:462.5px;width:12px;height:14px;background:#fff;border:1px solid #9a9a9a"></div>
<div class="a t" style="left:91.40px;top:461.84px;font-size:12px;line-height:15px;color:#333333;letter-spacing:0.126px;">list?sort_by=id&amp;sort_type=d…</div>
<div class="a" style="left:67px;top:480px;width:199px;height:21px;background:#ebebeb;"></div>
<div class="a" style="left:74px;top:483.5px;width:12px;height:14px;background:#fff;border:1px solid #9a9a9a"></div>
<div class="a t" style="left:91.40px;top:482.84px;font-size:12px;line-height:15px;color:#333333;letter-spacing:0.126px;">list?sort_by=id&amp;sort_type=d…</div>
<div class="a" style="left:67px;top:501px;width:199px;height:21px;background:#ffffff;"></div>
<div class="a" style="left:74px;top:504.5px;width:12px;height:14px;background:#fff;border:1px solid #9a9a9a"></div>
<div class="a t" style="left:91.40px;top:503.84px;font-size:12px;line-height:15px;color:#333333;letter-spacing:0.126px;">list?sort_by=id&amp;sort_type=d…</div>
<div class="a" style="left:67px;top:740px;width:199px;height:1px;background:#cbcbcb;"></div>
<div class="a" style="left:67px;top:741px;width:199px;height:27px;background:#f3f3f3;"></div>
<div class="a t" style="left:78.00px;top:747.94px;font-size:12px;line-height:15px;color:#333333;letter-spacing:0.041px;">4 / 33 requests</div>
<div class="a" style="left:168px;top:746px;width:1px;height:16px;background:#cfcfcf;"></div>
<div class="a t" style="left:178.00px;top:747.94px;font-size:12px;line-height:15px;color:#333333;letter-spacing:-0.132px;">3.4 kB / 10.2 kB</div>
<div class="a" style="left:267px;top:411px;width:1099px;height:25px;background:#f3f3f3;"></div>
<div class="a" style="left:267px;top:436px;width:1099px;height:1px;background:#cbcbcb;"></div>
<svg class="a" style="left:276px;top:419px;" width="8" height="8" viewBox="0 0 8 8"><path d="M0.5 0.5L7.5 7.5M7.5 0.5L0.5 7.5" stroke="#6e6e6e" stroke-width="1.4"/></svg>
<div class="a t" style="left:300.30px;top:416.54px;font-size:12px;line-height:15px;color:#5a5a5a;">Headers</div>
<div class="a t" style="left:366.00px;top:416.54px;font-size:12px;line-height:15px;color:#333;letter-spacing:0.046px;">Preview</div>
<div class="a" style="left:356px;top:434.5px;width:63px;height:2px;background:#3c4ee6;"></div>
<div class="a t" style="left:428.70px;top:416.54px;font-size:12px;line-height:15px;color:#5a5a5a;letter-spacing:-0.217px;">Response</div>
<div class="a t" style="left:500.60px;top:416.54px;font-size:12px;line-height:15px;color:#5a5a5a;letter-spacing:0.450px;">Initiator</div>
<div class="a t" style="left:564.00px;top:416.54px;font-size:12px;line-height:15px;color:#5a5a5a;">Timing</div>
<div class="a t" style="left:308px;top:435.57px;font-family:'Liberation Mono',monospace;font-size:11px;line-height:16px;-webkit-text-stroke:0.2px;letter-spacing:0.022px"><span style="color:#881391">rows</span><span style="color:#222222">: [{id: 3, is_primary: true, status: &quot;active&quot;, created_on: &quot;2022-05-16 11:21:23&quot;,…},…]</span></div>
<svg class="a" style="left:297.5px;top:441.5px;" width="8" height="6" viewBox="0 0 8 6"><path d="M0 0H7.5L3.75 5.5Z" fill="#6e6e6e"/></svg>
<div class="a t" style="left:320px;top:451.57px;font-family:'Liberation Mono',monospace;font-size:11px;line-height:16px;-webkit-text-stroke:0.2px;letter-spacing:0.022px"><span style="color:#881391">0</span><span style="color:#222222">: {id: 3, is_primary: true, status: &quot;active&quot;, created_on: &quot;2022-05-16 11:21:23&quot;,…}</span></div>
<svg class="a" style="left:309.5px;top:457.5px;" width="8" height="6" viewBox="0 0 8 6"><path d="M0 0H7.5L3.75 5.5Z" fill="#6e6e6e"/></svg>
<div class="a t" style="left:332px;top:467.57px;font-family:'Liberation Mono',monospace;font-size:11px;line-height:16px;-webkit-text-stroke:0.2px;letter-spacing:0.022px"><span style="color:#881391">company_id</span><span style="color:#222222">: </span><span style="color:#1c00cf">13</span></div>
<div class="a t" style="left:332px;top:483.57px;font-family:'Liberation Mono',monospace;font-size:11px;line-height:16px;-webkit-text-stroke:0.2px;letter-spacing:0.022px"><span style="color:#881391">created_on</span><span style="color:#222222">: </span><span style="color:#222222">&quot;</span><span style="color:#c41a16">2022-05-16 11:21:23</span><span style="color:#222222">&quot;</span></div>
<div class="a t" style="left:332px;top:499.57px;font-family:'Liberation Mono',monospace;font-size:11px;line-height:16px;-webkit-text-stroke:0.2px;letter-spacing:0.022px"><span style="color:#881391">id</span><span style="color:#222222">: </span><span style="color:#1c00cf">3</span></div>
<div class="a t" style="left:332px;top:515.57px;font-family:'Liberation Mono',monospace;font-size:11px;line-height:16px;-webkit-text-stroke:0.2px;letter-spacing:0.022px"><span style="color:#881391">is_primary</span><span style="color:#222222">: </span><span style="color:#0d22aa">true</span></div>
<div class="a t" style="left:332px;top:531.57px;font-family:'Liberation Mono',monospace;font-size:11px;line-height:16px;-webkit-text-stroke:0.2px;letter-spacing:0.022px"><span style="color:#881391">location</span><span style="color:#222222">: {id: 4, address1: &quot;ytutu&quot;, address2: &quot;7u867&quot;, city: &quot;89789&quot;, state: &quot;ty&quot;, pincode: &quot;5665&quot;,…}</span></div>
<svg class="a" style="left:321.5px;top:537.5px;" width="8" height="6" viewBox="0 0 8 6"><path d="M0 0H7.5L3.75 5.5Z" fill="#6e6e6e"/></svg>
<div class="a t" style="left:344px;top:547.57px;font-family:'Liberation Mono',monospace;font-size:11px;line-height:16px;-webkit-text-stroke:0.2px;letter-spacing:0.022px"><span style="color:#881391">address1</span><span style="color:#222222">: </span><span style="color:#222222">&quot;</span><span style="color:#c41a16">ytutu</span><span style="color:#222222">&quot;</span></div>
<div class="a t" style="left:344px;top:563.57px;font-family:'Liberation Mono',monospace;font-size:11px;line-height:16px;-webkit-text-stroke:0.2px;letter-spacing:0.022px"><span style="color:#881391">address2</span><span style="color:#222222">: </span><span style="color:#222222">&quot;</span><span style="color:#c41a16">7u867</span><span style="color:#222222">&quot;</span></div>
<div class="a t" style="left:344px;top:579.57px;font-family:'Liberation Mono',monospace;font-size:11px;line-height:16px;-webkit-text-stroke:0.2px;letter-spacing:0.022px"><span style="color:#881391">city</span><span style="color:#222222">: </span><span style="color:#222222">&quot;</span><span style="color:#c41a16">89789</span><span style="color:#222222">&quot;</span></div>
<div class="a t" style="left:344px;top:595.57px;font-family:'Liberation Mono',monospace;font-size:11px;line-height:16px;-webkit-text-stroke:0.2px;letter-spacing:0.022px"><span style="color:#881391">created_on</span><span style="color:#222222">: </span><span style="color:#222222">&quot;</span><span style="color:#c41a16">2022-05-16 11:21:23</span><span style="color:#222222">&quot;</span></div>
<div class="a t" style="left:344px;top:611.57px;font-family:'Liberation Mono',monospace;font-size:11px;line-height:16px;-webkit-text-stroke:0.2px;letter-spacing:0.022px"><span style="color:#881391">id</span><span style="color:#222222">: </span><span style="color:#1c00cf">4</span></div>
<div class="a t" style="left:344px;top:627.57px;font-family:'Liberation Mono',monospace;font-size:11px;line-height:16px;-webkit-text-stroke:0.2px;letter-spacing:0.022px"><span style="color:#881391">pincode</span><span style="color:#222222">: </span><span style="color:#222222">&quot;</span><span style="color:#c41a16">5665</span><span style="color:#222222">&quot;</span></div>
<div class="a t" style="left:344px;top:643.57px;font-family:'Liberation Mono',monospace;font-size:11px;line-height:16px;-webkit-text-stroke:0.2px;letter-spacing:0.022px"><span style="color:#881391">state</span><span style="color:#222222">: </span><span style="color:#222222">&quot;</span><span style="color:#c41a16">ty</span><span style="color:#222222">&quot;</span></div>
<div class="a t" style="left:344px;top:659.57px;font-family:'Liberation Mono',monospace;font-size:11px;line-height:16px;-webkit-text-stroke:0.2px;letter-spacing:0.022px"><span style="color:#881391">status</span><span style="color:#222222">: </span><span style="color:#222222">&quot;</span><span style="color:#c41a16">active</span><span style="color:#222222">&quot;</span></div>
<div class="a t" style="left:344px;top:675.57px;font-family:'Liberation Mono',monospace;font-size:11px;line-height:16px;-webkit-text-stroke:0.2px;letter-spacing:0.022px"><span style="color:#881391">updated_on</span><span style="color:#222222">: </span><span style="color:#222222">&quot;</span><span style="color:#c41a16">2022-05-16 11:21:23</span><span style="color:#222222">&quot;</span></div>
<div class="a t" style="left:332px;top:691.57px;font-family:'Liberation Mono',monospace;font-size:11px;line-height:16px;-webkit-text-stroke:0.2px;letter-spacing:0.022px"><span style="color:#881391">location_id</span><span style="color:#222222">: </span><span style="color:#1c00cf">4</span></div>
<div class="a t" style="left:332px;top:707.57px;font-family:'Liberation Mono',monospace;font-size:11px;line-height:16px;-webkit-text-stroke:0.2px;letter-spacing:0.022px"><span style="color:#881391">status</span><span style="color:#222222">: </span><span style="color:#222222">&quot;</span><span style="color:#c41a16">active</span><span style="color:#222222">&quot;</span></div>
<div class="a t" style="left:332px;top:723.57px;font-family:'Liberation Mono',monospace;font-size:11px;line-height:16px;-webkit-text-stroke:0.2px;letter-spacing:0.022px"><span style="color:#881391">updated_on</span><span style="color:#222222">: </span><span style="color:#222222">&quot;</span><span style="color:#c41a16">2022-05-16 11:21:23</span><span style="color:#222222">&quot;</span></div>
<div class="a t" style="left:320px;top:739.57px;font-family:'Liberation Mono',monospace;font-size:11px;line-height:16px;-webkit-text-stroke:0.2px;letter-spacing:0.022px"><span style="color:#881391">1</span><span style="color:#222222">: {id: 2, is_primary: true, status: &quot;active&quot;, created_on: &quot;2022-05-11 09:36:39&quot;,…}</span></div>
<svg class="a" style="left:311px;top:742.5px;" width="6" height="8" viewBox="0 0 6 8"><path d="M0 0V8L5.5 4Z" fill="#6e6e6e"/></svg>
<div class="a t" style="left:308px;top:755.57px;font-family:'Liberation Mono',monospace;font-size:11px;line-height:16px;-webkit-text-stroke:0.2px;letter-spacing:0.022px"><span style="color:#881391">totalItems</span><span style="color:#222222">: </span><span style="color:#1c00cf">2</span></div>
<div class="a" style="left:1351px;top:437px;width:15px;height:331px;background:#f1f1f1;"></div>
<svg class="a" style="left:1354px;top:442px;" width="9" height="6" viewBox="0 0 9 6"><path d="M0 5H9L4.5 0Z" fill="#505050"/></svg>
<div class="a" style="left:1352.5px;top:487.5px;width:12px;height:229px;background:#c1c1c1;"></div>
<svg class="a" style="left:1354px;top:756px;" width="9" height="6" viewBox="0 0 9 6"><path d="M0 0H9L4.5 5Z" fill="#505050"/></svg>
</body></html>
